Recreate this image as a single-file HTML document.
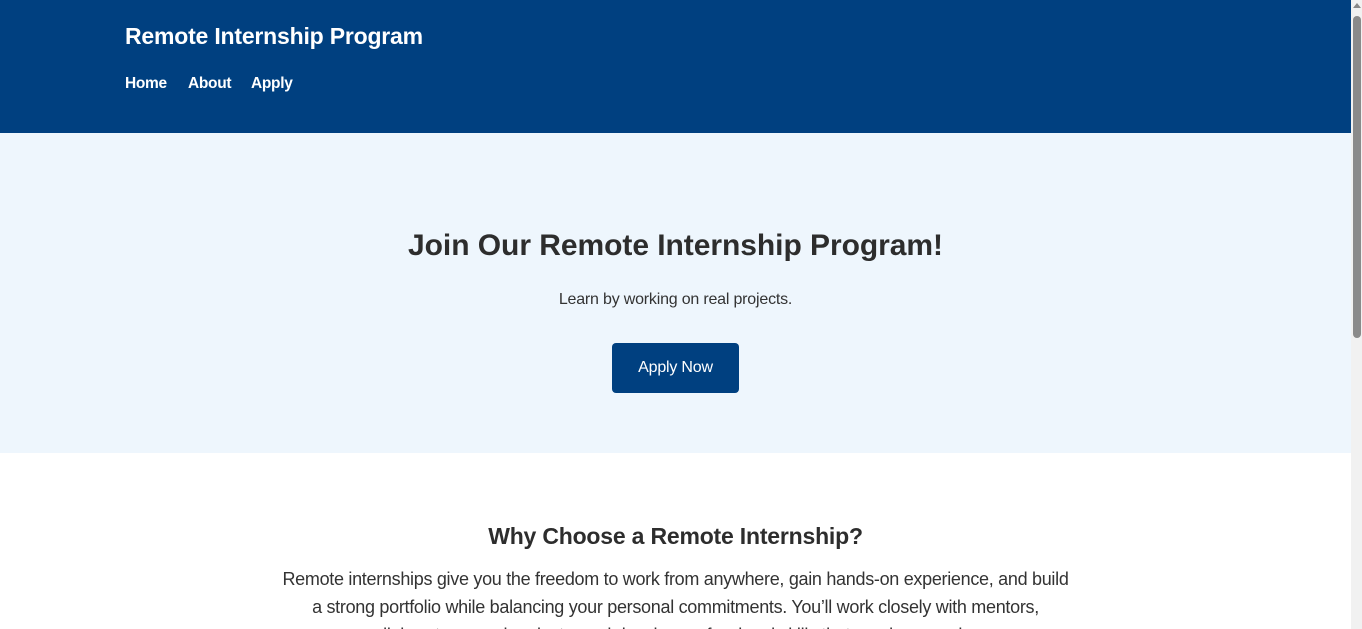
<!DOCTYPE html>
<html><head><style>
html,body{margin:0;padding:0;width:1362px;height:629px;overflow:hidden;font-family:"Liberation Sans",sans-serif;color:#333;background:#fff}
.wrap{width:1351px;position:relative;height:629px}
header{background:#004080;height:133px;position:relative;color:#fff}
header .t{position:absolute;left:125px;top:23px;font-size:23px;font-weight:bold;letter-spacing:-0.2px}
header nav{position:absolute;left:125px;top:75px;font-size:15.5px;font-weight:bold;letter-spacing:-0.3px}
header nav span{position:absolute;top:0}
.hero{background:#eef6fd;height:320px;text-align:center;position:relative}
.hero h1{position:absolute;left:0;right:0;margin:0;font-size:30px;font-weight:bold;top:96px;color:#2d2d2d;letter-spacing:-0.05px}
.hero p{position:absolute;left:0;right:0;top:158px;margin:0;font-size:16px;letter-spacing:-0.2px}
.btn{position:absolute;left:612px;top:210px;width:127px;height:50px;background:#004080;color:#fff;border-radius:4px;font-size:16px;line-height:50px;text-align:center;letter-spacing:-0.2px}
h2{position:absolute;left:0;right:0;top:523px;margin:0;text-align:center;font-size:23px;font-weight:bold;color:#2d2d2d;letter-spacing:-0.2px}
.txt{position:absolute;left:200px;width:951px;top:565px;text-align:center;font-size:18px;line-height:28px;margin:0;letter-spacing:-0.3px;white-space:nowrap}
.sb{position:absolute;left:1351px;top:0;width:11px;height:629px;background:#f1f1f1}
.sb div{position:absolute;left:2px;top:16px;width:8px;height:322px;background:#8a8a8a;border-radius:4px}
.sb i{position:absolute;left:2px;top:3px;width:0;height:0;border-left:4px solid transparent;border-right:4px solid transparent;border-bottom:5px solid #888}
</style></head><body>
<div class="wrap">
<header><div class="t">Remote Internship Program</div><nav><span style="left:0">Home</span><span style="left:63px">About</span><span style="left:126px">Apply</span></nav></header>
<div class="hero"><h1>Join Our Remote Internship Program!</h1><p>Learn by working on real projects.</p><div class="btn">Apply Now</div></div>
<h2>Why Choose a Remote Internship?</h2>
<p class="txt">Remote internships give you the freedom to work from anywhere, gain hands-on experience, and build<br>a strong portfolio while balancing your personal commitments. You’ll work closely with mentors,<br>collaborate on real projects, and develop professional skills that employers value.</p>
</div>
<div class="sb"><i></i><div></div></div>
</body></html>
